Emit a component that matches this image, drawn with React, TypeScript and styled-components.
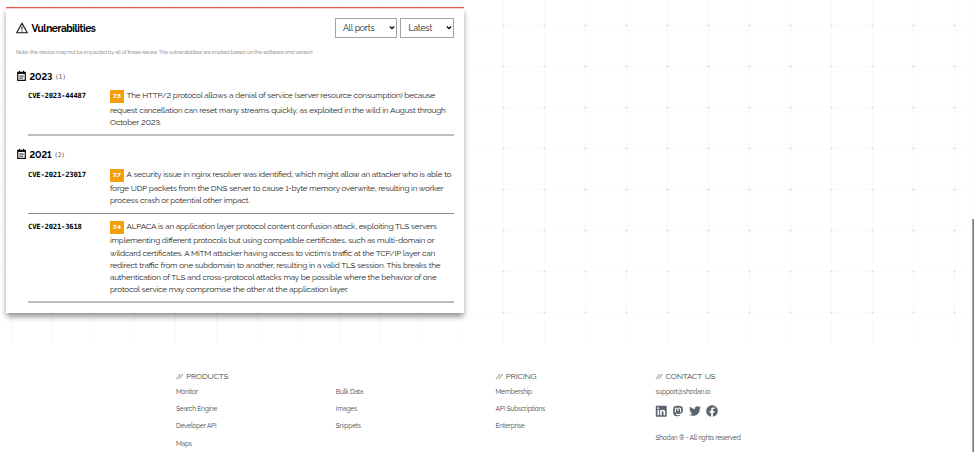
import React from 'react';
import styled, { createGlobalStyle } from 'styled-components';
import { FaLinkedin, FaMastodon, FaTwitter, FaFacebook } from 'react-icons/fa';

const GlobalStyle = createGlobalStyle`
  * { box-sizing: border-box; }
  body {
    margin: 0;
    background: #fff;
    color: #222;
    font-family: Raleway, Lato, sans-serif;
    font-feature-settings: 'lnum' 1, 'liga' 1;
    overflow: hidden;
  }
`;

const Page = styled.div`
  display: flex;
  width: 974px;
  height: 456px;
  background: #fff;
`;

const Content = styled.div`
  flex: 1;
  min-width: 0;
`;

const Scrollbar = styled.div`
  width: 2px;
  padding: 219px 0 4px;
  background: #fdfdfd;
`;

const Thumb = styled.div`
  height: 233px;
  border-left: 1px solid #a8a8a8;
  background: #7b7b7b;
`;

const Main = styled.main`
  height: 344px;
  padding: 7px 0 0 6px;
  background:
    radial-gradient(circle at 11.5px 25.5px, #dedede 0.5px, transparent 1.6px) 0 0 / 41px 41px,
    linear-gradient(90deg, transparent 11px, #fafafa 11px, #fafafa 12px, transparent 12px) 0 0 / 41px 41px,
    linear-gradient(transparent 25px, #fafafa 25px, #fafafa 26px, transparent 26px) 0 0 / 41px 41px,
    #fff;
`;

const Card = styled.section`
  width: 458px;
  height: 306px;
  padding: 10px 10px 0;
  background: #fff;
  border-top: 1px solid #e2574e;
  box-shadow: inset 0 1px 0 #f7cfcc, 0 4px 6px -1px rgba(0, 0, 0, 0.38), 0 4px 6px rgba(0, 0, 0, 0.12);
`;

const CardHeader = styled.header`
  display: flex;
  align-items: center;
  height: 20px;
  gap: 3.5px;
`;

const Title = styled.h2`
  flex: 1;
  margin: 0;
  color: #000;
  font-size: 10.1px;
  font-weight: 700;
  letter-spacing: -0.4px;
  white-space: nowrap;
`;

const Select = styled.div<{ $width: number }>`
  display: flex;
  align-items: center;
  justify-content: space-between;
  width: ${p => p.$width}px;
  height: 20px;
  padding: 0 1px 1px 7px;
  border: 1px solid #a3a3a3;
  background: #fff;
  color: #222;
  font-size: 8.8px;
  letter-spacing: -0.24px;
`;

const Note = styled.p`
  height: 11px;
  margin: 9px 0 11px;
  color: #777;
  font-size: 5.5px;
  line-height: 11px;
  letter-spacing: -0.169px;
  white-space: nowrap;
`;

const YearGroup = styled.section`
  & + & {
    margin-top: 11px;
  }
`;

const YearHeading = styled.h3`
  display: flex;
  align-items: center;
  height: 14px;
  margin: 0;
  gap: 2.5px;
  color: #000;
  font-size: 9.2px;
  font-weight: 700;
`;

const Count = styled.span`
  padding-top: 2px;
  color: #555;
  font: 400 6.4px 'DejaVu Sans Mono', monospace;
  letter-spacing: -0.3px;
`;

const Entry = styled.article<{ $height: number; $pad: number; $rule: string }>`
  display: grid;
  grid-template-columns: 82px 1fr;
  height: ${p => p.$height}px;
  margin-left: 12px;
  padding-top: ${p => p.$pad}px;
  border-bottom: ${p => p.$rule};
`;

const CveId = styled.div`
  color: #000;
  font: 700 7.2px/13px 'DejaVu Sans Mono', monospace;
  letter-spacing: -0.2px;
  white-space: nowrap;
`;

const Summary = styled.div`
  min-width: 0;
  padding-top: 1px;
`;

const Line = styled.div`
  height: 12.3px;
  font-size: 8.1px;
  line-height: 12.3px;
  letter-spacing: -0.188px;
  white-space: nowrap;
`;

const LeadLine = styled(Line)<{ $height: number }>`
  display: flex;
  gap: 3px;
  height: ${p => p.$height}px;
  line-height: 11.5px;
`;

const Score = styled.span`
  flex: none;
  width: 13.5px;
  height: 12.5px;
  background: #f59e0b;
  color: #fff;
  font-size: 6.2px;
  font-weight: 800;
  line-height: 12.5px;
  text-align: center;
`;

const Footer = styled.footer`
  display: grid;
  grid-template-columns: repeat(4, 159.8px);
  padding: 25px 0 0 176px;
  color: #444;
`;

const FooterTitle = styled.h4`
  height: 14px;
  margin: 0 0 2.7px;
  font-size: 8.1px;
  font-weight: 400;
  line-height: 14px;
  letter-spacing: -0.2px;
  word-spacing: 1px;
  white-space: nowrap;
`;

const FooterText = styled.div<{ $gap?: number }>`
  height: 12px;
  margin-bottom: ${p => p.$gap ?? 5.4}px;
  font-size: 6.6px;
  line-height: 12px;
  letter-spacing: -0.21px;
  white-space: nowrap;
`;

const Social = styled.div`
  display: flex;
  align-items: center;
  height: 14px;
  margin-bottom: 14px;
  color: #5b6570;
`;

const SocialIcon = styled.span<{ $gap: number }>`
  display: flex;
  margin-right: ${p => p.$gap}px;
`;

const WarningIcon = () => (
  <svg width="12" height="12" viewBox="0 0 12 12" fill="none" stroke="#111">
    <path d="M6 1.2 11.3 10.8H.7Z" strokeWidth="1.1" strokeLinejoin="round" />
    <path d="M6 4.4V7.6M6 8.4V9.4" strokeWidth="1.1" />
  </svg>
);

const CalendarIcon = () => (
  <svg width="11" height="12" viewBox="0 0 11 12" fill="none" stroke="#111">
    <path d="M1.7 2.3H9.3V10.4H1.7Z" strokeWidth="1.2" strokeLinejoin="round" />
    <path d="M1.5 3.2H9.5" strokeWidth="1.6" />
    <path d="M3.5.8V3M7.5.8V3" strokeWidth="1.2" />
    <path d="M3.2 6H7.8M3.2 8.1H7.2" strokeWidth=".9" />
  </svg>
);

const Chevron = () => (
  <svg width="6" height="5" viewBox="0 0 6 5" fill="none" stroke="#111" strokeWidth="1.4">
    <path d="M.8 1.4 3 3.6 5.2 1.4" />
  </svg>
);

interface Cve {
  id: string;
  score: string;
  height: number;
  pad: number;
  lead: number;
  rule: string;
  lines: string[];
}

const years: { year: string; count: number; items: Cve[] }[] = [
  {
    year: '2023',
    count: 1,
    items: [
      {
        id: 'CVE-2023-44487', score: '7.5', height: 53, pad: 6, lead: 14.2, rule: '2px solid #bdbdbd',
        lines: [
          'The HTTP/2 protocol allows a denial of service (server resource consumption) because',
          'request cancellation can reset many streams quickly, as exploited in the wild in August through',
          'October 2023.',
        ],
      },
    ],
  },
  {
    year: '2021',
    count: 2,
    items: [
      {
        id: 'CVE-2021-23017', score: '7.7', height: 53, pad: 7, lead: 13.2, rule: '1px solid #8c8c8c',
        lines: [
          'A security issue in nginx resolver was identified, which might allow an attacker who is able to',
          'forge UDP packets from the DNS server to cause 1-byte memory overwrite, resulting in worker',
          'process crash or potential other impact.',
        ],
      },
      {
        id: 'CVE-2021-3618', score: '7.4', height: 89, pad: 6, lead: 13.3, rule: '2px solid #bdbdbd',
        lines: [
          'ALPACA is an application layer protocol content confusion attack, exploiting TLS servers',
          'implementing different protocols but using compatible certificates, such as multi-domain or',
          "wildcard certificates. A MiTM attacker having access to victim's traffic at the TCP/IP layer can",
          'redirect traffic from one subdomain to another, resulting in a valid TLS session. This breaks the',
          'authentication of TLS and cross-protocol attacks may be possible where the behavior of one',
          'protocol service may compromise the other at the application layer.',
        ],
      },
    ],
  },
];

const CveEntry = ({ cve }: { cve: Cve }) => {
  const [lead, ...rest] = cve.lines;
  return (
    <Entry $height={cve.height} $pad={cve.pad} $rule={cve.rule}>
      <CveId>{cve.id}</CveId>
      <Summary>
        <LeadLine $height={cve.lead}>
          <Score>{cve.score}</Score>
          <span>{lead}</span>
        </LeadLine>
        {rest.map(text => <Line key={text}>{text}</Line>)}
      </Summary>
    </Entry>
  );
};

export default function App() {
  return (
    <>
      <GlobalStyle />
      <Page>
        <Content>
          <Main>
            <Card>
              <CardHeader>
                <WarningIcon />
                <Title>Vulnerabilities</Title>
                <Select $width={62}>All ports<Chevron /></Select>
                <Select $width={53.6}>Latest<Chevron /></Select>
              </CardHeader>
              <Note>
                Note: the device may not be impacted by all of these issues. The vulnerabilities are implied based on the software and version
              </Note>
              {years.map(group => (
                <YearGroup key={group.year}>
                  <YearHeading>
                    <CalendarIcon />
                    {group.year}
                    <Count>({group.count})</Count>
                  </YearHeading>
                  {group.items.map(cve => <CveEntry key={cve.id} cve={cve} />)}
                </YearGroup>
              ))}
            </Card>
          </Main>
          <Footer>
            <div>
              <FooterTitle>// PRODUCTS</FooterTitle>
              <FooterText>Monitor</FooterText>
              <FooterText>Search Engine</FooterText>
              <FooterText>Developer API</FooterText>
              <FooterText>Maps</FooterText>
            </div>
            <div>
              <FooterTitle as="div" />
              <FooterText>Bulk Data</FooterText>
              <FooterText>Images</FooterText>
              <FooterText>Snippets</FooterText>
            </div>
            <div>
              <FooterTitle>// PRICING</FooterTitle>
              <FooterText>Membership</FooterText>
              <FooterText>API Subscriptions</FooterText>
              <FooterText>Enterprise</FooterText>
            </div>
            <div>
              <FooterTitle>// CONTACT US</FooterTitle>
              <FooterText $gap={6.5}>support@shodan.io</FooterText>
              <Social>
                <SocialIcon $gap={4}><FaLinkedin size={12.5} /></SocialIcon>
                <SocialIcon $gap={5}><FaMastodon size={12} /></SocialIcon>
                <SocialIcon $gap={5.5}><FaTwitter size={12} /></SocialIcon>
                <SocialIcon $gap={0}><FaFacebook size={12} /></SocialIcon>
              </Social>
              <FooterText>Shodan ® - All rights reserved</FooterText>
            </div>
          </Footer>
        </Content>
        <Scrollbar>
          <Thumb />
        </Scrollbar>
      </Page>
    </>
  );
}
